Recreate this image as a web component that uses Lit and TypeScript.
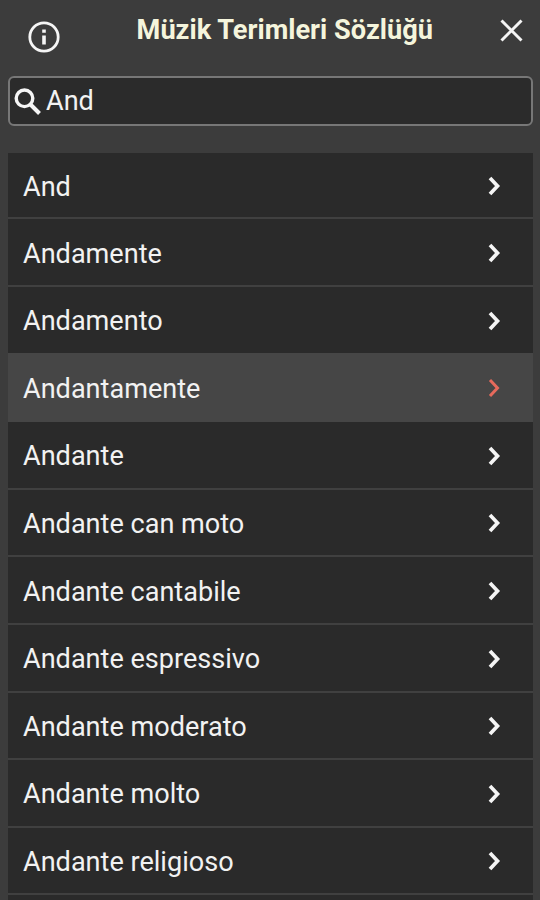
import { LitElement, html, css } from "lit";
import { customElement } from "lit/decorators.js";

const TERMS = ["And", "Andamente", "Andamento", "Andantamente", "Andante", "Andante can moto", "Andante cantabile", "Andante espressivo", "Andante moderato", "Andante molto", "Andante religioso"];

@customElement("app-root")
export class AppRoot extends LitElement {
  static styles = css`
    :host { display: block; width: 540px; height: 900px; overflow: hidden; background: #3c3c3c; font-family: Roboto, sans-serif; color: #f2f2f2; }
    .header { height: 76px; display: grid; grid-template-columns: 88px 1fr 56px; box-sizing: border-box; }
    .info { margin: 20px 0 0 27px; width: 34px; height: 34px; }
    .title { margin: 15px 0 0 48.6px; font-size: 27.2px; line-height: 31px; font-weight: 700; color: #f5f5dc; white-space: nowrap; }
    .close { margin: 18px 0 0 15px; width: 24px; height: 24px; }
    svg { display: block; fill: none; stroke: #f5f5f5; }
    .search { margin: 0 7px 0 8px; height: 50px; box-sizing: border-box; border: 2px solid #777; border-radius: 6px; background: #2b2b2b; display: flex; align-items: center; padding-left: 4px; padding-bottom: 1px; font-size: 28px; }
    .search svg { width: 30px; height: 30px; margin-right: 2px; }
    span { display: block; transform: scaleX(0.967); transform-origin: left center; }
    .list { margin: 27px 7px 0 8px; }
    .row { height: 67.6px; box-sizing: border-box; border-bottom: 2px solid #404040; background: #2a2a2a; display: flex; align-items: center; justify-content: space-between; padding: 1.8px 30.6px 0 15px; font-size: 28px; }
    .row:first-child { height: 66.4px; }
    .row:last-child { height: 10px; border: 0; }
    .row svg { width: 16px; height: 22px; }
    .row.selected { background: #464646; border-color: #464646; }
    .before { border-color: #464646; }
    .selected svg { stroke: #e66a5c; stroke-width: 3; }
  `;
  render() {
    return html`
      <div class="header">
        <svg class="info" viewBox="0 0 34 34" stroke-width="2.8"><circle cx="17" cy="17" r="14.2"/><path d="M17 15.5v9M17 9.5v3.2" stroke-width="3.6"/></svg>
        <div class="title">Müzik Terimleri Sözlüğü</div>
        <svg class="close" viewBox="0 0 24 24" stroke-width="3"><path d="M2.5 2.5l20 20M22.5 2.5L2.500 22.500"/></svg>
      </div>
      <div class="search"><svg viewBox="0 0 30 30" stroke-width="3.4"><circle cx="10.500" cy="12.300" r="8.300"/><path d="M16.500 18.500l9 9" stroke-width="4"/></svg><span>And</span></div>
      <div class="list">${TERMS.map((t, i) => html`<div class="row ${i === 3 ? "selected" : i === 2 ? "before" : ""}"><span>${t}</span><svg viewBox="0 0 16 22" stroke-width="3.7"><path d="M4 3l7.500 8-7.500 8"/></svg></div>`)}<div class="row"></div></div>`;
  }
}
